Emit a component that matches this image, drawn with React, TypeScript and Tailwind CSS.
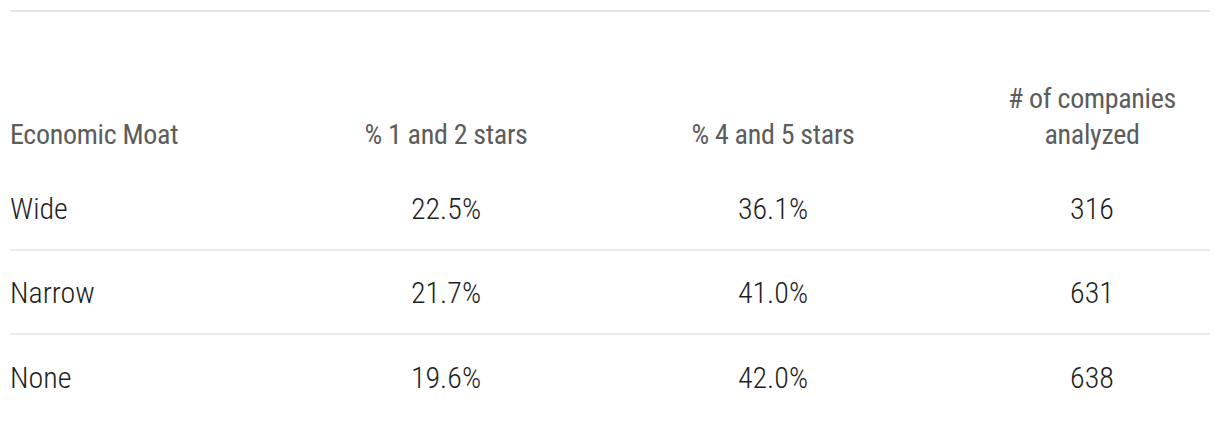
import React from 'react';

interface MoatRow {
  moat: string;
  lowStars: string;
  highStars: string;
  companies: number;
}

const rows: MoatRow[] = [
  { moat: 'Wide', lowStars: '22.5%', highStars: '36.1%', companies: 316 },
  { moat: 'Narrow', lowStars: '21.7%', highStars: '41.0%', companies: 631 },
  { moat: 'None', lowStars: '19.6%', highStars: '42.0%', companies: 638 },
];

const font = { fontFamily: 'Roboto, "DejaVu Sans Condensed", sans-serif' };

const App: React.FC = () => {
  const cols = 'grid grid-cols-[310px_252px_402px_236px]';

  return (
    <div className="w-[1220px] h-[428px] bg-white px-[10px] pt-[10px] font-stretch-condensed" style={font}>
      <div className="border-t-2 border-[#e6e6e6]">
        {/* header */}
        <div className={`${cols} h-[155px] items-end pb-[14px] text-[28px] leading-[36px] tracking-[-0.3px] font-normal text-[#5c5c5c]`}>
          <div>Economic Moat</div>
          <div className="text-center">% 1 and 2 stars</div>
          <div className="text-center">% 4 and 5 stars</div>
          <div className="text-center">
            # of companies
            <br />
            analyzed
          </div>
        </div>

        {/* body */}
        {rows.map((row, i) => (
          <div
            key={row.moat}
            className={`${cols} h-[84px] items-center text-[30px] font-light text-[#1e1e1e] ${
              i < rows.length - 1 ? 'border-b-2 border-[#ebebeb]' : ''
            }`}
          >
            <div>{row.moat}</div>
            <div className="text-center">{row.lowStars}</div>
            <div className="text-center">{row.highStars}</div>
            <div className="text-center">{row.companies}</div>
          </div>
        ))}
      </div>
    </div>
  );
};

export default App;
